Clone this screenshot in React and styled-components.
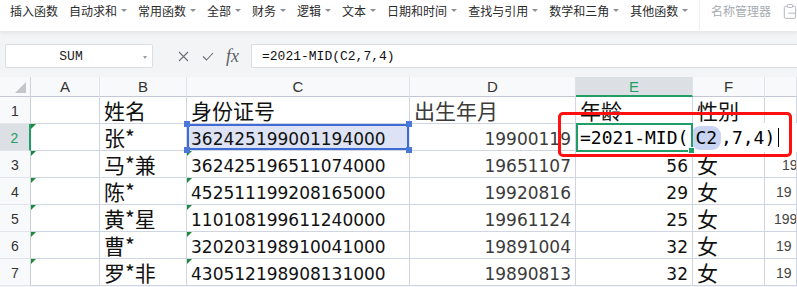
import React from "react";
import styled, { createGlobalStyle, css } from "styled-components";

const GlobalStyle = createGlobalStyle`
  html, body {
    margin: 0;
    padding: 0;
    background: #fff;
  }
  body {
    width: 797px;
    height: 287px;
    overflow: hidden;
    font-family: "Noto Sans CJK SC", "Liberation Sans", sans-serif;
  }
`;

const COLS = "31px 69px 87px 223px 166px 117px 72px 1fr";
const GRID_LINE = "#d0d5e2";
const GREEN = "#1f9e65";

const menuItems = [
  { label: "插入函数" },
  { label: "自动求和", caret: true },
  { label: "常用函数", caret: true },
  { label: "全部", caret: true },
  { label: "财务", caret: true },
  { label: "逻辑", caret: true },
  { label: "文本", caret: true },
  { label: "日期和时间", caret: true },
  { label: "查找与引用", caret: true },
  { label: "数学和三角", caret: true },
  { label: "其他函数", caret: true },
];

const rows = [
  { n: 1, b: "姓名", c: "身份证号", cCjk: true, d: "出生年月", dCjk: true, e: "年龄", f: "性别" },
  { n: 2, b: "张*", c: "362425199001194000", d: "19900119", editing: true },
  { n: 3, b: "马*兼", c: "362425196511074000", d: "19651107", e: "56", f: "女", g: "19", gIndent: 17 },
  { n: 4, b: "陈*", c: "452511199208165000", d: "19920816", e: "29", f: "女", g: "19", gIndent: 11 },
  { n: 5, b: "黄*星", c: "110108199611240000", d: "19961124", e: "25", f: "女", g: "199", gIndent: 9 },
  { n: 6, b: "曹*", c: "320203198910041000", d: "19891004", e: "32", f: "女", g: "19", gIndent: 11 },
  { n: 7, b: "罗*非", c: "430512198908131000", d: "19890813", e: "32", f: "女", g: "19", gIndent: 11 },
];

const App = () => {
  return (
    <>
      <GlobalStyle />
      <StPage>
        <StToolbar>
          {menuItems.map((item) => (
            <StMenuItem key={item.label}>
              {item.label}
              {item.caret && <StCaret />}
            </StMenuItem>
          ))}
          <StDivider />
          <StMenuItem $muted>名称管理器</StMenuItem>
          <StPasteIcon width="16" height="18" viewBox="0 0 16 18">
            <rect x="1.5" y="3.5" width="13" height="14" rx="1.5" fill="none" stroke="#a9adb3" />
            <rect x="5" y="1.5" width="6" height="3.5" rx="1" fill="#fff" stroke="#a9adb3" />
            <path d="M6 11.5h8.5" stroke="#a9adb3" />
          </StPasteIcon>
        </StToolbar>

        <StFormulaBar>
          <StNameBox>
            <span>SUM</span>
            <StSmallCaret />
          </StNameBox>
          <StBarIcons>
            <svg width="11" height="11" viewBox="0 0 11 11">
              <path d="M1 1l9 9M10 1l-9 9" stroke="#6b6f76" strokeWidth="1.1" />
            </svg>
            <svg width="12" height="9" viewBox="0 0 12 9">
              <path d="M1 4.5l3.5 3.5L11 1" fill="none" stroke="#6b6f76" strokeWidth="1.1" />
            </svg>
            <StFx>fx</StFx>
          </StBarIcons>
          <StFormulaInput>=2021-MID(C2,7,4)</StFormulaInput>
        </StFormulaBar>

        <StSheet>
          <StHeadCell $corner>
            <StCornerMark />
          </StHeadCell>
          {["A", "B", "C", "D", "E", "F", ""].map((col) => (
            <StHeadCell key={col || "G"} $active={col === "E"}>
              {col}
            </StHeadCell>
          ))}

          {rows.map((row) => (
            <React.Fragment key={row.n}>
              <StRowHead $active={row.n === 2}>{row.n}</StRowHead>
              <StCell $flag={row.n > 1} />
              <StCell $cjk>{row.b}</StCell>
              <StCell $cjk={row.cCjk} $flag={row.n > 2} $picked={row.n === 2}>
                {row.c}
                {row.n === 2 && (
                  <>
                    <StHandle $x="left" $y="top" />
                    <StHandle $x="right" $y="top" />
                    <StHandle $x="left" $y="bottom" />
                    <StHandle $x="right" $y="bottom" />
                  </>
                )}
              </StCell>
              <StCell $cjk={row.dCjk} $right={!row.dCjk} $soft>
                {row.d}
              </StCell>
              {row.editing ? (
                <StCell $open>
                  <StEditor>
                    =2021-MID(<StRefToken>C2</StRefToken>,7,4)
                    <StTextCaret />
                  </StEditor>
                  <StActiveFrame>
                    <StFillHandle />
                  </StActiveFrame>
                </StCell>
              ) : (
                <StCell $cjk={row.n === 1} $right={row.n !== 1}>
                  {row.e}
                </StCell>
              )}
              <StCell $cjk>{row.f}</StCell>
              <StCell $small>
                {row.g && <span style={{ paddingLeft: row.gIndent }}>{row.g}</span>}
              </StCell>
            </React.Fragment>
          ))}

          <StAnnotation />
        </StSheet>
      </StPage>
    </>
  );
};

export default App;

const StPage = styled.div`
  width: 797px;
  height: 287px;
  overflow: hidden;
  background: #f3f4f6;
`;

const StToolbar = styled.div`
  height: 31px;
  display: flex;
  align-items: flex-start;
  gap: 11px;
  padding: 2px 0 0 10px;
  box-sizing: border-box;
  background: #fff;
  box-shadow: 0 2px 4px rgba(0, 0, 0, 0.07);
  position: relative;
  z-index: 1;
`;

const StMenuItem = styled.div`
  display: flex;
  align-items: center;
  height: 16px;
  font-family: "Noto Sans CJK SC", sans-serif;
  font-size: 12px;
  color: ${(p) => (p.$muted ? "#a7abb1" : "#2b2b2b")};
  white-space: nowrap;
`;

const StCaret = styled.span`
  margin-left: 4px;
  width: 0;
  height: 0;
  border-left: 3px solid transparent;
  border-right: 3px solid transparent;
  border-top: 3px solid #8d9096;
`;

const StDivider = styled.div`
  width: 1px;
  height: 30px;
  margin-top: -2px;
  background: #eceef0;
`;

const StPasteIcon = styled.svg`
  margin-left: 1px;
`;

const StFormulaBar = styled.div`
  height: 46px;
  display: flex;
  align-items: flex-start;
  padding: 13px 0 0 5px;
  box-sizing: border-box;
`;

const StNameBox = styled.div`
  position: relative;
  width: 148px;
  height: 24px;
  box-sizing: border-box;
  background: #fff;
  border: 1px solid #dcdee2;
  border-radius: 2px;
  display: flex;
  align-items: center;
  padding: 0 16px 0 0;
  justify-content: center;
  font-family: "Liberation Mono", monospace;
  font-size: 13px;
  color: #222;
`;

const StSmallCaret = styled.span`
  position: absolute;
  right: 5px;
  top: 11px;
  border-left: 2.5px solid transparent;
  border-right: 2.5px solid transparent;
  border-top: 3px solid #9a9da2;
`;

const StBarIcons = styled.div`
  width: 98px;
  height: 24px;
  display: flex;
  align-items: center;
  padding-left: 25px;
  gap: 13px;
  box-sizing: border-box;
`;

const StFx = styled.span`
  margin-left: -1px;
  font-family: "Liberation Serif", serif;
  font-style: italic;
  font-size: 18px;
  color: #5d6168;
  line-height: 1;
`;

const StFormulaInput = styled.div`
  flex: 1;
  height: 24px;
  box-sizing: border-box;
  background: #fff;
  border: 1px solid #dcdee2;
  border-right: none;
  border-radius: 2px 0 0 2px;
  padding-left: 10px;
  display: flex;
  align-items: center;
  font-family: "Liberation Mono", monospace;
  font-size: 13px;
  color: #111;
`;

const StSheet = styled.div`
  position: relative;
  display: grid;
  grid-template-columns: ${COLS};
  grid-auto-rows: 27px;
  grid-template-rows: 20px;
  background: #fff;
`;

const StHeadCell = styled.div`
  position: relative;
  box-sizing: border-box;
  height: 20px;
  display: flex;
  align-items: center;
  justify-content: center;
  background: ${(p) => (p.$active ? "#dcdfe4" : "#f8f9fa")};
  border-right: 1px solid #dfe2e7;
  border-bottom: ${(p) => (p.$active ? `2px solid ${GREEN}` : "1px solid #c3c8d4")};
  font-family: "Liberation Sans", sans-serif;
  font-size: 15px;
  color: ${(p) => (p.$active ? GREEN : "#333")};
  ${(p) =>
    p.$corner &&
    css`
      border-right-color: #cfd3dc;
    `}
`;

const StCornerMark = styled.span`
  position: absolute;
  right: 4px;
  bottom: 3px;
  width: 0;
  height: 0;
  border-left: 11px solid transparent;
  border-bottom: 11px solid #c4c6ca;
`;

const StRowHead = styled.div`
  box-sizing: border-box;
  display: flex;
  align-items: center;
  justify-content: center;
  padding-top: 2px;
  background: ${(p) => (p.$active ? "#dcdfe4" : "#f8f9fa")};
  border-right: ${(p) => (p.$active ? `2px solid ${GREEN}` : "1px solid #c9cdd8")};
  border-bottom: 1px solid #e1e4ea;
  font-family: "Liberation Sans", sans-serif;
  font-size: 14px;
  color: ${(p) => (p.$active ? GREEN : "#333")};
`;

const StCell = styled.div`
  position: relative;
  box-sizing: border-box;
  border-right: 1px solid ${GRID_LINE};
  border-bottom: 1px solid ${GRID_LINE};
  display: flex;
  align-items: flex-start;
  justify-content: ${(p) => (p.$right ? "flex-end" : "flex-start")};
  padding: ${(p) => (p.$cjk ? "1px 4px 0" : "5px 4px 0")};
  line-height: ${(p) => (p.$cjk ? "25px" : "normal")};
  overflow: ${(p) => (p.$open ? "visible" : "hidden")};
  white-space: nowrap;
  font-family: ${(p) =>
    p.$cjk ? '"Noto Sans CJK SC", sans-serif' : '"DejaVu Sans", sans-serif'};
  font-size: ${(p) => (p.$cjk ? "21px" : "17px")};
  color: ${(p) => (p.$soft ? "#3b3b3b" : "#111")};
  ${(p) =>
    p.$small &&
    css`
      font-family: "Liberation Sans", sans-serif;
      font-size: 14px;
      padding: 6px 0 0;
      color: #444;
    `}
  ${(p) =>
    p.$open &&
    css`
      z-index: 3;
    `}
  ${(p) =>
    p.$picked &&
    css`
      background: #dde3f4;
      box-shadow: inset 0 0 0 2px #3f6bd4;
      overflow: visible;
      z-index: 2;
      border-right-color: transparent;
    `}
  ${(p) =>
    p.$flag &&
    css`
      &::before {
        content: "";
        position: absolute;
        left: 0;
        top: 0;
        border-top: 5px solid #1b8a3c;
        border-right: 5px solid transparent;
      }
    `}
`;

const StHandle = styled.span`
  position: absolute;
  width: 6px;
  height: 6px;
  background: #4a77d8;
  ${(p) => (p.$x === "left" ? "left: -3px;" : "right: -3px;")}
  ${(p) => (p.$y === "top" ? "top: -3px;" : "bottom: -3px;")}
`;

const StEditor = styled.div`
  position: absolute;
  left: 0;
  top: -1px;
  width: 221px;
  height: 29px;
  box-sizing: border-box;
  padding: 0 0 0 4px;
  display: flex;
  align-items: center;
  background: #fff;
  font-family: "DejaVu Sans Mono", monospace;
  font-size: 18px;
  color: #000;
`;

const StRefToken = styled.span`
  margin-left: 3px;
  padding: 0 4px;
  border-radius: 9px;
  background: #c9d4f3;
  line-height: 24px;
`;

const StTextCaret = styled.span`
  width: 1px;
  height: 19px;
  margin-left: 3px;
  background: #000;
`;

const StActiveFrame = styled.div`
  position: absolute;
  left: 0;
  top: -1px;
  width: 117px;
  height: 29px;
  box-sizing: border-box;
  border: 2px solid ${GREEN};
  pointer-events: none;
`;

const StFillHandle = styled.span`
  position: absolute;
  right: -4px;
  bottom: -4px;
  width: 5px;
  height: 5px;
  background: ${GREEN};
  border: 1px solid #fff;
`;

const StAnnotation = styled.div`
  position: absolute;
  left: 558px;
  top: 35px;
  width: 234px;
  height: 45px;
  box-sizing: border-box;
  border: 3px solid #ff1010;
  border-radius: 5px;
  z-index: 5;
  pointer-events: none;
`;
